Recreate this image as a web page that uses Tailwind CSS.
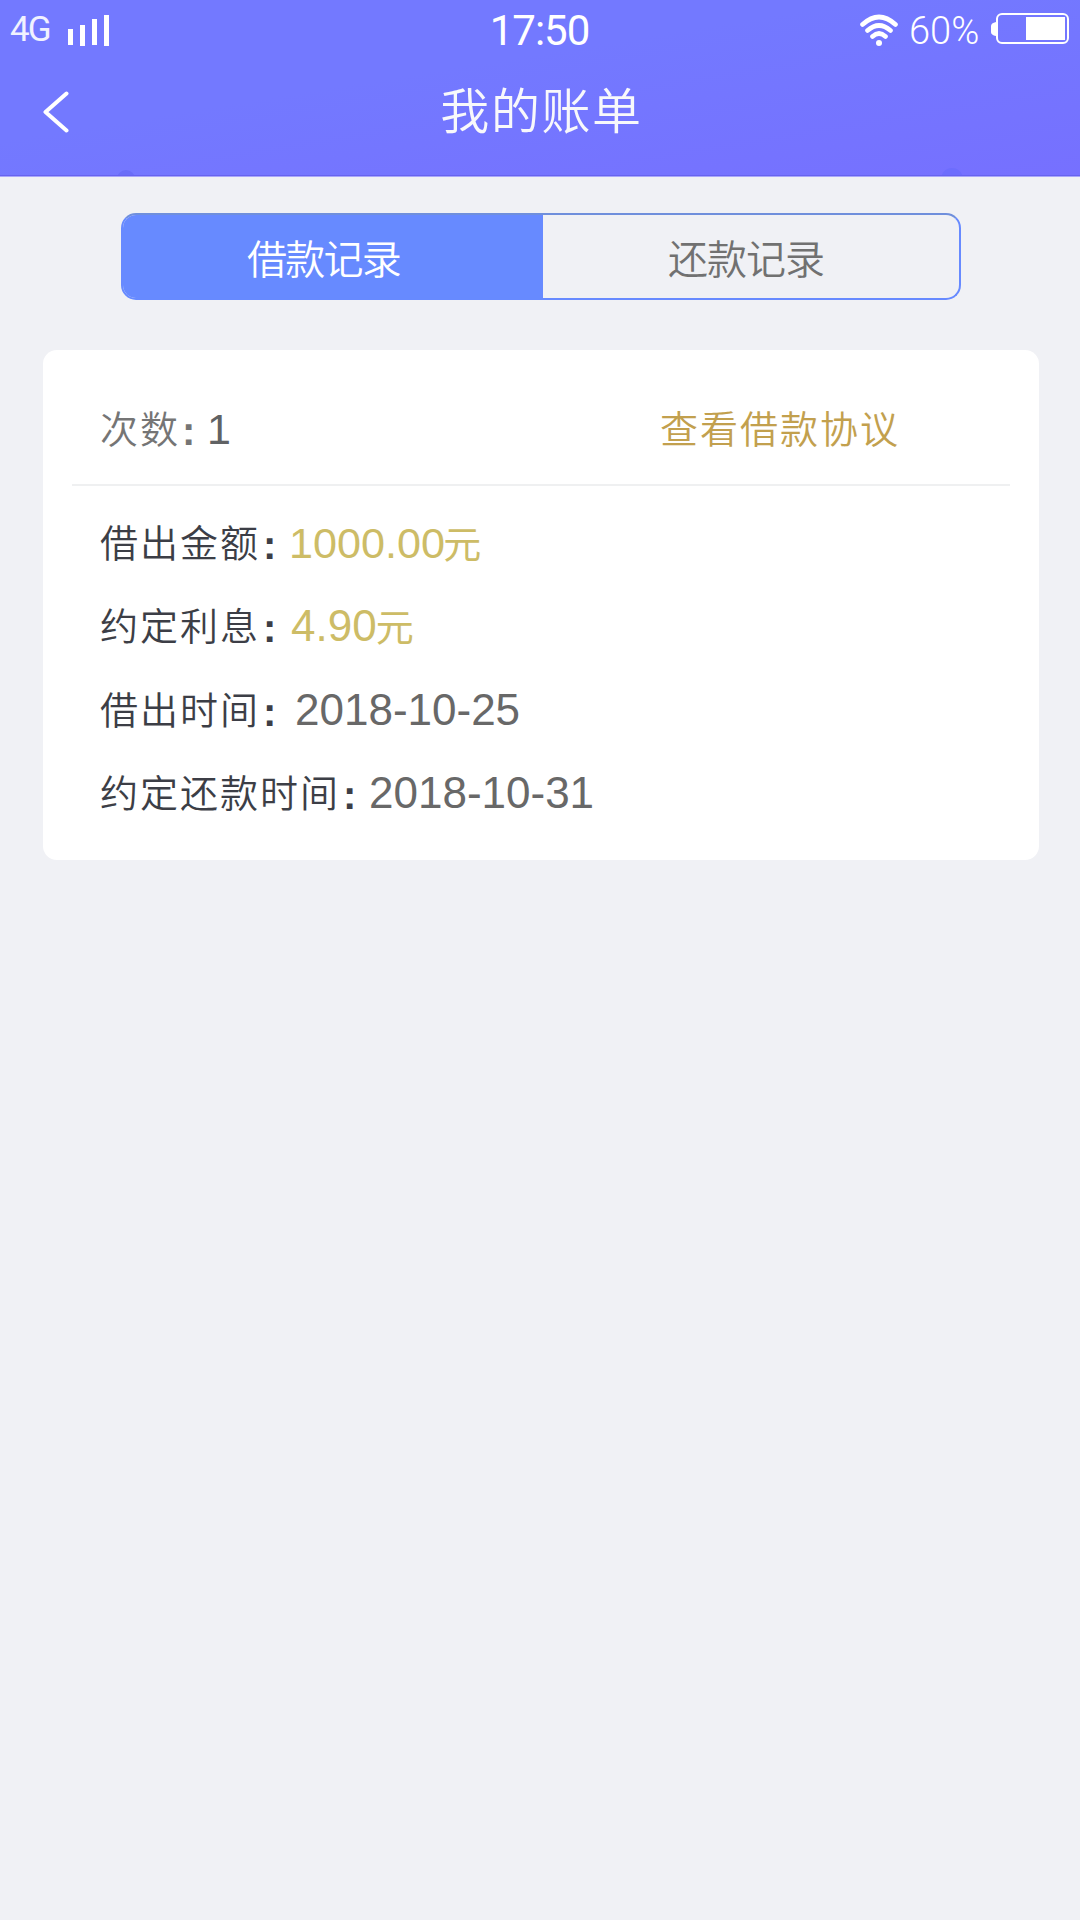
<!DOCTYPE html>
<html lang="zh-CN">
<head>
<meta charset="utf-8">
<title>我的账单</title>
<script src="https://cdn.jsdelivr.net/npm/@tailwindcss/browser@4"></script>
</head>
<body class="w-[1080px] h-[1920px] overflow-hidden bg-[#f0f1f5] font-['Noto_Sans_CJK_SC',sans-serif]">
<header class="relative h-[177px] overflow-hidden border-b border-[#a9a6fb] bg-linear-to-br from-[#7379ff] from-40% to-[#7670ff] text-white">
  <div class="absolute left-[117px] top-[170px] size-[18px] rounded-full bg-[#6a6df8]"></div>
  <div class="absolute left-[941px] top-[168px] size-[22px] rounded-full bg-[#6d6dfd]"></div>
  <div class="absolute inset-x-0 bottom-0 h-px bg-[#6763ee]"></div>
  <div class="grid h-[60px] grid-cols-3 items-center pl-[10px] pr-[11px] font-['Roboto',sans-serif] font-light leading-none">
    <div class="flex items-center">
      <span class="w-[58px] text-[35px] font-normal tracking-[-2px] pb-[1px] text-white/90">4G</span>
      <svg class="w-[41px] h-[31px]" viewBox="0 0 41 31" fill="currentColor"><path d="M0 14h5v16H0zM12 10h5v21h-5zM24 4h5v26h-5zM36 0h5v31h-5z"/></svg>
    </div>
    <span class="pt-[2px] text-center text-[42px] font-normal tracking-[-1px]">17:50</span>
    <div class="flex items-center justify-end">
      <svg class="w-[39px] h-[33px]" viewBox="0 0 39 33" fill="none" stroke="currentColor" stroke-width="4.6" stroke-linecap="round"><path d="M2.500 10.500Q19 -4.500 35.500 10.500M7.500 16.500Q19 6.500 30.500 16.500M12.500 22.500Q19 16.500 25.500 22.500"/><circle cx="19" cy="29" r="3" fill="currentColor" stroke="none"/></svg>
      <span class="ml-[10px] w-[82px] pt-[1px] text-[38px] tracking-[0px]">60%</span>
      <svg class="mb-[3px] w-[78px] h-[31px]" viewBox="0 0 78 31" fill="currentColor"><path d="M5 9v14Q0 22 0 19v-6Q0 10 5 9Z"/><rect x="6" y="1" width="71" height="29" rx="5" fill="none" stroke="currentColor" stroke-width="2"/><path d="M35 4h39v23H35z"/></svg>
    </div>
  </div>
  <div class="grid h-[104px] grid-cols-3 items-center pl-[43px] pr-[43px]">
    <svg class="w-[27px] h-[42px]" viewBox="0 0 27 42" fill="none" stroke="currentColor" stroke-width="4" stroke-linecap="round" stroke-linejoin="round"><path d="M23.500 2.500 2.500 21 23.500 39.500"/></svg>
    <h1 class="pb-[9px] pl-[3px] text-center text-[49px] font-[350] tracking-[1.600px] leading-[60px] text-[#f8f8fb]">我的账单</h1>
  </div>
</header>
<main class="flex flex-col">
  <nav class="ml-[121px] mt-[36px] flex h-[87px] w-[840px] overflow-hidden rounded-[15px] border-2 border-[#678aff] border-t-[#6f8fdc] text-[40px] font-[350] leading-[85px]">
    <button class="w-[420px] bg-[#678aff] pr-[19px] tracking-[-1.700px] text-white">借款记录</button>
    <button class="flex-1 pr-[10px] tracking-[-1px] text-[#717171]">还款记录</button>
  </nav>
  <section class="ml-[43px] mt-[50px] h-[510px] w-[996px] rounded-[14px] bg-white px-[29px] text-[38px] leading-[60px] text-[#3c3e46]">
    <div class="flex h-[136px] items-start border-b-2 border-[#eff0f1] pl-[28px] pt-[47px] text-[#757575]">
      <span class="w-[82px] font-[350] tracking-[2px]">次数</span><span class="w-[25px] pt-[3px] font-['Liberation_Sans',sans-serif] font-bold text-[40px] leading-[62px]">:</span>
      <span class="w-[453px] pt-[2px] font-['Liberation_Sans',sans-serif] text-[43px] text-[#606264]">1</span>
      <a class="font-[350] tracking-[2px] text-[#c2a04e]">查看借款协议</a>
    </div>
    <dl class="flex flex-col gap-[23.300px] pl-[28px] pt-[25px]">
      <div class="flex h-[60px]"><dt class="flex w-[189px] font-[350]"><span class="w-[163px] tracking-[2px]">借出金额</span><span class="pt-[3px] font-['Liberation_Sans',sans-serif] font-bold text-[40px] leading-[62px]">:</span></dt><dd class="pt-[2px] font-['Liberation_Sans','Noto_Sans_CJK_SC',sans-serif] text-[43.200px] text-[#cdbc66]">1000.00<span class="-ml-[2px] text-[38px]">元</span></dd></div>
      <div class="flex h-[60px]"><dt class="flex w-[191px] font-[350]"><span class="w-[163px] tracking-[2px]">约定利息</span><span class="pt-[3px] font-['Liberation_Sans',sans-serif] font-bold text-[40px] leading-[62px]">:</span></dt><dd class="pt-[2px] font-['Liberation_Sans','Noto_Sans_CJK_SC',sans-serif] text-[44px] text-[#cdbc66]">4.90<span class="-ml-[1px] text-[38px]">元</span></dd></div>
      <div class="flex h-[60px]"><dt class="flex w-[195px] font-[350]"><span class="w-[163px] tracking-[2px]">借出时间</span><span class="pt-[3px] font-['Liberation_Sans',sans-serif] font-bold text-[40px] leading-[62px]">:</span></dt><dd class="pt-[2px] font-['Liberation_Sans',sans-serif] text-[44px] text-[#686868]">2018-10-25</dd></div>
      <div class="flex h-[60px]"><dt class="flex w-[269px] font-[350]"><span class="w-[243px] tracking-[2px]">约定还款时间</span><span class="pt-[3px] font-['Liberation_Sans',sans-serif] font-bold text-[40px] leading-[62px]">:</span></dt><dd class="pt-[2px] font-['Liberation_Sans',sans-serif] text-[44px] text-[#686868]">2018-10-31</dd></div>
    </dl>
  </section>
</main>
</body>
</html>
